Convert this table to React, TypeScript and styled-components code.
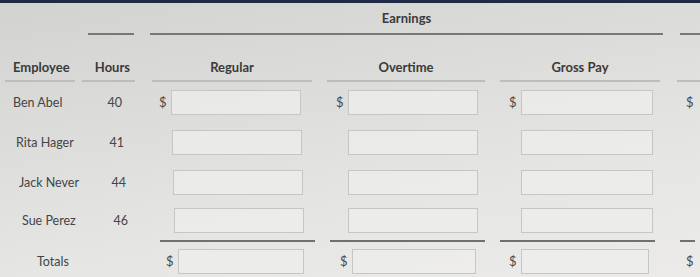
import React from "react";
import styled, { createGlobalStyle } from "styled-components";

const GlobalStyle = createGlobalStyle`
  html, body {
    margin: 0;
    padding: 0;
  }
  body {
    width: 700px;
    height: 277px;
    overflow: hidden;
    font-family: Lato, "Open Sans", "Liberation Sans", sans-serif;
    color: #3b3b3b;
    background: linear-gradient(170deg, #d2d2d1 0%, #dcdcdb 35%, #e6e6e4 70%, #ecebea 100%);
  }
`;

const COLUMNS = "78px 65px 177px 173px 175px 1fr";

const TopBar = styled.div`
  height: 3px;
  background: #1f2a44;
`;

const Sheet = styled.div`
  display: flex;
  flex-direction: column;
`;

const Row = styled.div<{ $height: number }>`
  display: grid;
  grid-template-columns: ${COLUMNS};
  height: ${(p) => p.$height}px;
  align-items: center;
`;

const Ruled = styled.div<{ $l: number; $r: number; $span?: number; $color?: string; $w?: number }>`
  align-self: end;
  grid-column: span ${(p) => p.$span ?? 1};
  margin: 0 ${(p) => p.$r}px 0 ${(p) => p.$l}px;
  ${(p) => (p.$w ? `width: ${p.$w}px;` : "")}
  border-bottom: 2px solid ${(p) => p.$color ?? "#bdbdbc"};
  display: flex;
  align-items: flex-end;
  height: 100%;
  box-sizing: border-box;
`;

const GroupTitle = styled.span`
  flex: 1;
  text-align: center;
  font-size: 13px;
  font-weight: 700;
  color: #3a3a3a;
  padding-bottom: 7px;
`;

const HeadLabel = styled.span<{ $align: "left" | "center" | "right"; $pad?: number }>`
  flex: 1;
  text-align: ${(p) => p.$align};
  font-size: 13px;
  font-weight: 700;
  color: #3a3a3a;
  padding: 0 ${(p) => (p.$align === "right" ? p.$pad ?? 0 : 0)}px 5px
    ${(p) => (p.$align === "left" ? p.$pad ?? 0 : 0)}px;
`;

const Name = styled.div<{ $indent: number }>`
  font-size: 12.5px;
  color: #444;
  padding-left: ${(p) => p.$indent}px;
  white-space: nowrap;
`;

const Hours = styled.div<{ $pad: number }>`
  font-size: 12.5px;
  color: #444;
  text-align: right;
  padding-right: ${(p) => p.$pad}px;
`;

const Money = styled.div<{ $shift?: number }>`
  display: flex;
  align-items: center;
  padding-left: ${(p) => 16 + (p.$shift ?? 0)}px;
`;

const Dollar = styled.span`
  width: 12px;
  font-size: 13px;
  color: #4a4a4a;
`;

const Field = styled.div<{ $w: number }>`
  width: ${(p) => p.$w}px;
  height: 25px;
  box-sizing: border-box;
  border: 1px solid #c6c6c4;
  background: rgba(238, 238, 236, 0.75);
`;

const Blank = styled.div``;

type Line = { name: string; hours: number };

const staff: Line[] = [
  { name: "Ben Abel", hours: 40 },
  { name: "Rita Hager", hours: 41 },
  { name: "Jack Never", hours: 44 },
  { name: "Sue Perez", hours: 46 },
];

function MoneyCell({ sign, w = 130, shift }: { sign: boolean; w?: number; shift?: number }) {
  return (
    <Money $shift={shift}>
      <Dollar>{sign ? "$" : ""}</Dollar>
      <Field $w={w} />
    </Money>
  );
}

export default function App() {
  return (
    <>
      <GlobalStyle />
      <TopBar />
      <Sheet>
        <Row $height={32}>
          <Blank />
          <Ruled $l={10} $r={9} $color="#77787a" />
          <Ruled $l={7} $r={5} $span={3} $color="#77787a">
            <GroupTitle>Earnings</GroupTitle>
          </Ruled>
          <Ruled $l={12} $r={0} $color="#77787a" />
        </Row>
        <Row $height={47}>
          <Ruled $l={5} $r={3}>
            <HeadLabel $align="left" $pad={8}>Employee</HeadLabel>
          </Ruled>
          <Ruled $l={4} $r={8}>
            <HeadLabel $align="right" $pad={5}>Hours</HeadLabel>
          </Ruled>
          <Ruled $l={9} $r={8}>
            <HeadLabel $align="center">Regular</HeadLabel>
          </Ruled>
          <Ruled $l={7} $r={8}>
            <HeadLabel $align="center">Overtime</HeadLabel>
          </Ruled>
          <Ruled $l={7} $r={8}>
            <HeadLabel $align="center">Gross Pay</HeadLabel>
          </Ruled>
          <Ruled $l={9} $r={0} />
        </Row>
        {staff.map((s, i) => (
          <Row key={s.name} $height={i === 3 ? 36 : 40}>
            <Name $indent={13 + i * 3}>{s.name}</Name>
            <Hours $pad={21 - i * 2}>{s.hours}</Hours>
            <MoneyCell sign={i === 0} shift={i} />
            <MoneyCell sign={i === 0} />
            <MoneyCell sign={i === 0} w={132} />
            <Money $shift={2}>
              <Dollar>{i === 0 ? "$" : ""}</Dollar>
            </Money>
          </Row>
        ))}
        <Row $height={4}>
          <Blank />
          <Blank />
          <Ruled $l={17} $r={5} $color="#6f7072" />
          <Ruled $l={10} $r={8} $color="#6f7072" />
          <Ruled $l={7} $r={13} $color="#6f7072" />
          <Ruled $l={12} $r={0} $w={15} $color="#6f7072" />
        </Row>
        <Row $height={38}>
          <Name $indent={37}>Totals</Name>
          <Blank />
          <MoneyCell sign shift={7} w={126} />
          <MoneyCell sign shift={4} w={124} />
          <MoneyCell sign w={128} />
          <Money $shift={2}>
            <Dollar>$</Dollar>
          </Money>
        </Row>
      </Sheet>
    </>
  );
}
